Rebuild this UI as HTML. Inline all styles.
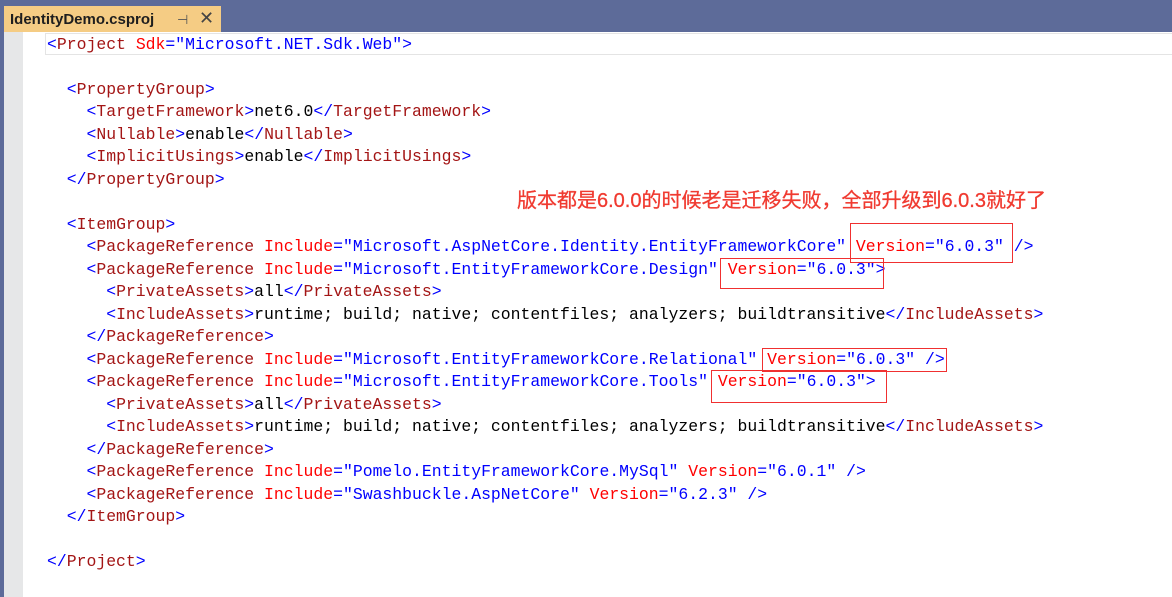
<!DOCTYPE html>
<html><head><meta charset="utf-8"><style>
body{margin:0;width:1172px;height:597px;overflow:hidden;background:#5d6b99;position:relative;font-family:"Liberation Mono",monospace}
#tab{position:absolute;left:4px;top:6px;width:217px;height:26px;background:#f5cc84;font:bold 15px "Liberation Sans",sans-serif;color:#1e1e1e}
#tab span{position:absolute;top:5px}
#ed{position:absolute;left:4px;top:32px;width:1168px;height:565px;background:#fff}
#gut{position:absolute;left:4px;top:32px;width:19px;height:565px;background:#e6e7e8}
#cur{position:absolute;left:45px;top:33px;width:1130px;height:20px;border:1px solid #e4e4e4;border-right:none}
.l{position:absolute;left:47px;font-size:16.45px;white-space:pre;line-height:20px;color:#000}
.b{color:#0000ff}.t{color:#a31515}.a{color:#ff0000}
.box{position:absolute;border:1px solid #f03030}
#cn{position:absolute;left:517px;top:184px;font:20px "Liberation Sans","Noto Sans CJK SC",sans-serif;color:#f03a30;white-space:nowrap;-webkit-text-stroke:0.3px #f03a30}
</style></head><body>
<div id="tab"><span style="left:6px">IdentityDemo.csproj</span><span style="left:173px;font-weight:normal;font-size:13px;top:6px;color:#555">⊣</span><span style="left:195px;font-weight:normal;font-size:18px;top:2px;color:#444">✕</span></div>
<div id="ed"></div><div id="gut"></div><div id="cur"></div>
<div class="l" style="top:35px"><span class="b">&lt;</span><span class="t">Project</span> <span class="a">Sdk</span><span class="b">="Microsoft.NET.Sdk.Web"&gt;</span></div>
<div class="l" style="top:80px">  <span class="b">&lt;</span><span class="t">PropertyGroup</span><span class="b">&gt;</span></div>
<div class="l" style="top:102px">    <span class="b">&lt;</span><span class="t">TargetFramework</span><span class="b">&gt;</span>net6.0<span class="b">&lt;/</span><span class="t">TargetFramework</span><span class="b">&gt;</span></div>
<div class="l" style="top:125px">    <span class="b">&lt;</span><span class="t">Nullable</span><span class="b">&gt;</span>enable<span class="b">&lt;/</span><span class="t">Nullable</span><span class="b">&gt;</span></div>
<div class="l" style="top:147px">    <span class="b">&lt;</span><span class="t">ImplicitUsings</span><span class="b">&gt;</span>enable<span class="b">&lt;/</span><span class="t">ImplicitUsings</span><span class="b">&gt;</span></div>
<div class="l" style="top:170px">  <span class="b">&lt;/</span><span class="t">PropertyGroup</span><span class="b">&gt;</span></div>
<div class="l" style="top:215px">  <span class="b">&lt;</span><span class="t">ItemGroup</span><span class="b">&gt;</span></div>
<div class="l" style="top:237px">    <span class="b">&lt;</span><span class="t">PackageReference</span> <span class="a">Include</span><span class="b">="Microsoft.AspNetCore.Identity.EntityFrameworkCore"</span> <span class="a">Version</span><span class="b">="6.0.3" /&gt;</span></div>
<div class="l" style="top:260px">    <span class="b">&lt;</span><span class="t">PackageReference</span> <span class="a">Include</span><span class="b">="Microsoft.EntityFrameworkCore.Design"</span> <span class="a">Version</span><span class="b">="6.0.3"&gt;</span></div>
<div class="l" style="top:282px">      <span class="b">&lt;</span><span class="t">PrivateAssets</span><span class="b">&gt;</span>all<span class="b">&lt;/</span><span class="t">PrivateAssets</span><span class="b">&gt;</span></div>
<div class="l" style="top:305px">      <span class="b">&lt;</span><span class="t">IncludeAssets</span><span class="b">&gt;</span>runtime; build; native; contentfiles; analyzers; buildtransitive<span class="b">&lt;/</span><span class="t">IncludeAssets</span><span class="b">&gt;</span></div>
<div class="l" style="top:327px">    <span class="b">&lt;/</span><span class="t">PackageReference</span><span class="b">&gt;</span></div>
<div class="l" style="top:350px">    <span class="b">&lt;</span><span class="t">PackageReference</span> <span class="a">Include</span><span class="b">="Microsoft.EntityFrameworkCore.Relational"</span> <span class="a">Version</span><span class="b">="6.0.3" /&gt;</span></div>
<div class="l" style="top:372px">    <span class="b">&lt;</span><span class="t">PackageReference</span> <span class="a">Include</span><span class="b">="Microsoft.EntityFrameworkCore.Tools"</span> <span class="a">Version</span><span class="b">="6.0.3"&gt;</span></div>
<div class="l" style="top:395px">      <span class="b">&lt;</span><span class="t">PrivateAssets</span><span class="b">&gt;</span>all<span class="b">&lt;/</span><span class="t">PrivateAssets</span><span class="b">&gt;</span></div>
<div class="l" style="top:417px">      <span class="b">&lt;</span><span class="t">IncludeAssets</span><span class="b">&gt;</span>runtime; build; native; contentfiles; analyzers; buildtransitive<span class="b">&lt;/</span><span class="t">IncludeAssets</span><span class="b">&gt;</span></div>
<div class="l" style="top:440px">    <span class="b">&lt;/</span><span class="t">PackageReference</span><span class="b">&gt;</span></div>
<div class="l" style="top:462px">    <span class="b">&lt;</span><span class="t">PackageReference</span> <span class="a">Include</span><span class="b">="Pomelo.EntityFrameworkCore.MySql"</span> <span class="a">Version</span><span class="b">="6.0.1" /&gt;</span></div>
<div class="l" style="top:485px">    <span class="b">&lt;</span><span class="t">PackageReference</span> <span class="a">Include</span><span class="b">="Swashbuckle.AspNetCore"</span> <span class="a">Version</span><span class="b">="6.2.3" /&gt;</span></div>
<div class="l" style="top:507px">  <span class="b">&lt;/</span><span class="t">ItemGroup</span><span class="b">&gt;</span></div>
<div class="l" style="top:552px"><span class="b">&lt;/</span><span class="t">Project</span><span class="b">&gt;</span></div>
<div id="cn">版本都是6.0.0的时候老是迁移失败，全部升级到6.0.3就好了</div>
<div class="box" style="left:850px;top:223px;width:161px;height:38px"></div>
<div class="box" style="left:720px;top:258px;width:162px;height:29px"></div>
<div class="box" style="left:762px;top:348px;width:183px;height:22px"></div>
<div class="box" style="left:711px;top:370px;width:174px;height:31px"></div>
</body></html>
